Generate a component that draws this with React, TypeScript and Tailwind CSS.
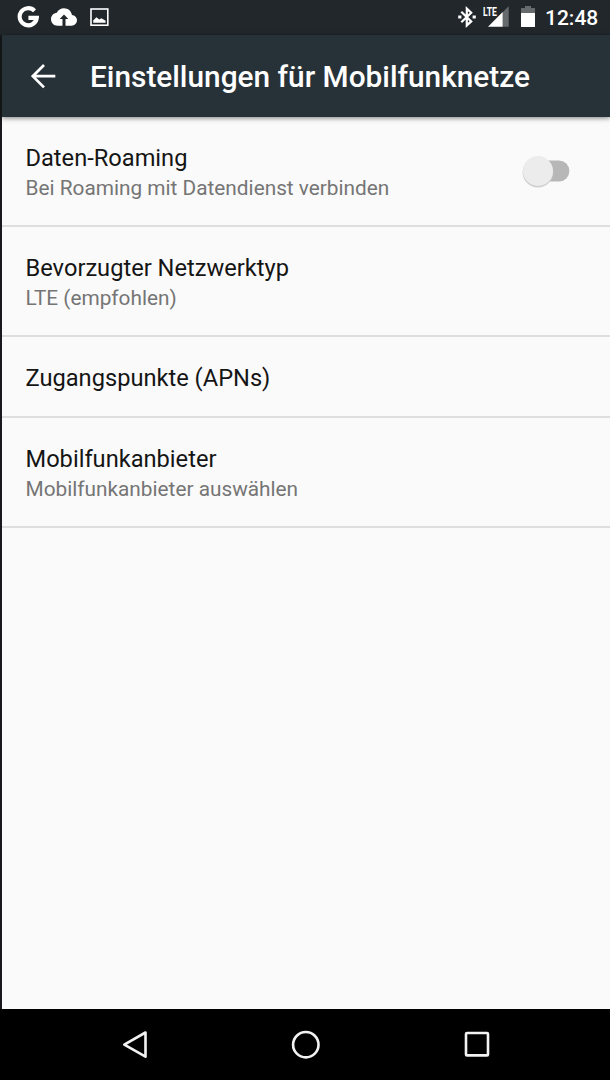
import type { ReactNode } from 'react';

type RowProps = { title: string; summary?: string; children?: ReactNode };

function Row({ title, summary, children }: RowProps) {
  return (
    <div
      className={`flex items-start justify-between border-b-2 border-[#dedede] pl-[23.5px] pr-10 pt-[26px] ${
        summary ? 'h-[110px]' : 'h-[81px]'
      }`}
    >
      <div className="flex flex-col whitespace-nowrap">
        <span className="text-[23.65px] leading-[30px] text-[#151515]">{title}</span>
        {summary && <span className="text-[20.8px] leading-[30px] text-[#757575]">{summary}</span>}
      </div>
      {children}
    </div>
  );
}

function Toggle() {
  return (
    <button role="switch" aria-checked="false" aria-label="Daten-Roaming" className="mt-3 flex h-[34px] w-[48px] items-start">
      <svg width="48" height="34" viewBox="0 0 48 34">
        <rect x="6" y="5.5" width="41.4" height="21" rx="10.5" fill="#b7b7b7" />
        <circle cx="15.9" cy="17.2" r="15.3" fill="#cfcfcf" />
        <circle cx="16" cy="16" r="15" fill="#ececec" />
      </svg>
    </button>
  );
}

function StatusBar() {
  return (
    <div className="flex h-[35px] items-start bg-[#21272b] text-white">
      <svg className="ml-[17px] mt-1.5" width="22" height="22" viewBox="0 0 22 22" fill="none">
        <path d="M17.5 4.8A8.6 8.6 0 1 0 19.8 11.9H11.4" stroke="#fff" strokeWidth="4.1" />
      </svg>
      <svg className="ml-[12px] mt-[4px]" width="26" height="26" viewBox="0 0 24 24" fill="#fff">
        <path d="M19.35 10.04C18.67 6.59 15.64 4 12 4 9.11 4 6.6 5.64 5.35 8.04 2.34 8.36 0 10.91 0 14c0 3.31 2.69 6 6 6h4.6v-6.2H8l4-4 4 4h-2.6V20H19c2.76 0 5-2.24 5-5 0-2.64-2.05-4.78-4.65-4.96z" />
      </svg>
      <svg className="ml-[13px] mt-2" width="19" height="18" viewBox="0 0 19 18">
        <rect x="1" y="1" width="16.8" height="16.2" fill="none" stroke="#fff" strokeWidth="1.6" />
        <path d="M3.2 14.8V12.4L6.4 9.2 9.2 11.4 11.4 10.2 15.6 12.8V14.8Z" fill="#fff" />
      </svg>
      <div className="ml-auto flex items-start pr-3">
        <svg className="mt-1.5" width="18" height="22" viewBox="0 0 18 22" fill="none" stroke="#fff" strokeWidth="2.2">
          <path d="M3.3 5.7L13.2 15.4 8.8 19.4V2.6L13.2 6.7 3.3 16.3" />
          <path d="M0.2 11H3.4M14.6 11H17.8" strokeWidth="2.8" />
        </svg>
        <span className="ml-[7px] mt-[3px] w-[14px] origin-left scale-x-[0.64] text-[13.5px] font-bold leading-4">LTE</span>
        <svg className="-ml-[9px] mt-[6px]" width="21" height="21" viewBox="0 0 21 21">
          <path d="M14.7 6.2L20.7 0.2V20.7H14.7Z" fill="#656a6d" />
          <path d="M0 20.7L14.7 6V20.7Z" fill="#fff" />
        </svg>
        <svg className="ml-3 mt-1.5" width="14" height="21" viewBox="0 0 14 21">
          <path d="M4 0H10V2H14V8H0V2H4Z" fill="#656a6d" />
          <path d="M0 7H14V21H0Z" fill="#fff" />
        </svg>
        <span className="ml-[10px] mt-[5px] w-[53px] whitespace-nowrap text-[21px] font-medium leading-[26px]">12:48</span>
      </div>
    </div>
  );
}

export default function App() {
  return (
    <div className="flex h-[1080px] w-[610px] flex-col overflow-hidden bg-[#fafafa] font-['Roboto','Noto_Sans',sans-serif]">
      <StatusBar />
      <div className="flex min-h-0 flex-1 flex-col border-l-2 border-[#17191c]">
        <header className="z-10 flex h-[82px] shrink-0 items-start bg-[#273238] text-white shadow-[0_1px_5px_rgba(0,0,0,0.5)]">
          <svg className="ml-[29px] mt-[29px]" width="26" height="26" viewBox="0 0 26 26" fill="none" stroke="#fff" strokeWidth="2.7">
            <path d="M24.3 12.2H2.6M13 1L1.8 12.2 13 23.4" />
          </svg>
          <h1 className="ml-[33px] mt-6 whitespace-nowrap text-[29.82px] font-medium leading-9">Einstellungen für Mobilfunknetze</h1>
        </header>
        <main className="flex flex-1 flex-col">
          <Row title="Daten-Roaming" summary="Bei Roaming mit Datendienst verbinden">
            <Toggle />
          </Row>
          <Row title="Bevorzugter Netzwerktyp" summary="LTE (empfohlen)" />
          <Row title="Zugangspunkte (APNs)" />
          <Row title="Mobilfunkanbieter" summary="Mobilfunkanbieter auswählen" />
        </main>
      </div>
      <nav className="flex h-[71px] shrink-0 items-start bg-black">
        <svg className="ml-[122px] mt-[21px]" width="27" height="29" viewBox="0 0 27 29" fill="none" stroke="#f2f2f2" strokeWidth="2.6" strokeLinejoin="round">
          <path d="M2.3 14.6L23.5 2.5V26.7Z" />
        </svg>
        <svg className="ml-[142px] mt-[21px]" width="30" height="30" viewBox="0 0 30 30" fill="none" stroke="#f2f2f2" strokeWidth="2.6">
          <circle cx="14.8" cy="14.7" r="12.7" />
        </svg>
        <svg className="ml-[143px] mt-[22px]" width="27" height="27" viewBox="0 0 27 27" fill="none" stroke="#f2f2f2" strokeWidth="2.6">
          <rect x="2" y="2" width="22" height="22.4" rx="1" />
        </svg>
      </nav>
    </div>
  );
}
